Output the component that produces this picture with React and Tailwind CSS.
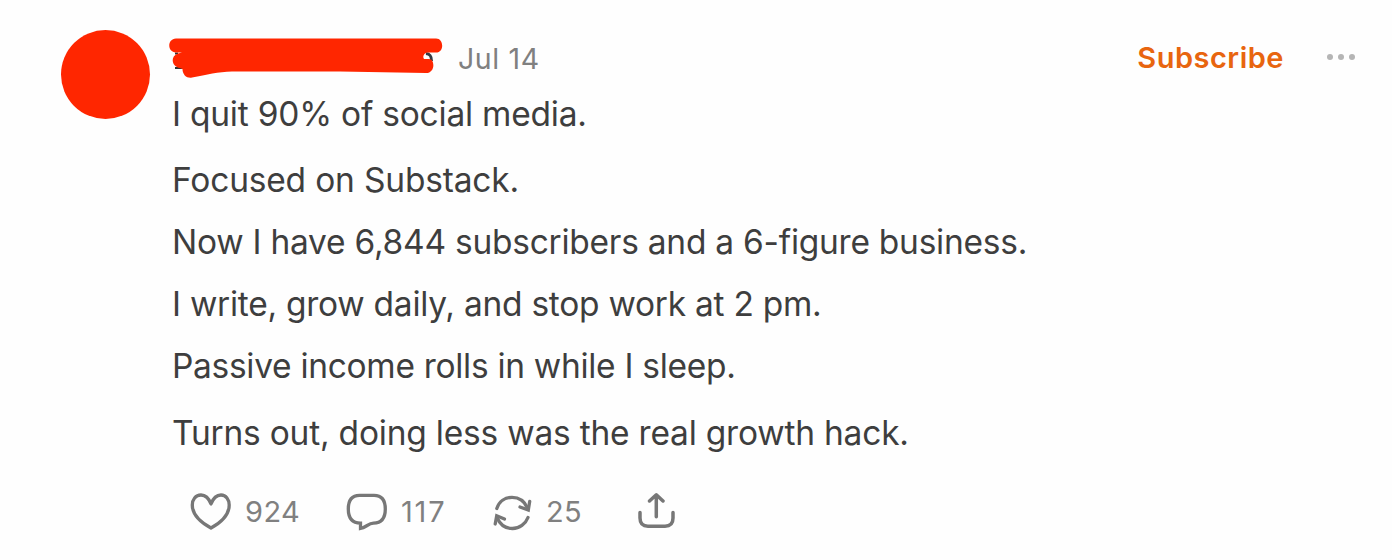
import React from 'react';

const LINES = [
  { text: 'I quit 90% of social media.', className: 'mb-1 tracking-[-0.22px]' },
  { text: 'Focused on Substack.', className: 'tracking-[-0.18px]' },
  { text: 'Now I have 6,844 subscribers and a 6-figure business.', className: 'tracking-[-0.25px]' },
  { text: 'I write, grow daily, and stop work at 2 pm.', className: 'tracking-[-0.26px]' },
  { text: 'Passive income rolls in while I sleep.', className: 'mb-[5px] tracking-[-0.3px]' },
  { text: 'Turns out, doing less was the real growth hack.', className: 'tracking-[-0.21px]' },
];

// Marker strokes that hide the author's name
function RedactedName() {
  return (
    <svg className="block h-[42px] w-[276px] shrink-0" viewBox="168 37 276 42">
      <path d="M175 52.500h3v2h-3zM175 67h9v2h-9z" fill="#333" />
      <path d="M426 53.500C430.500 54 431.500 56.500 431.500 61" fill="none" stroke="#333b44" strokeWidth="3" />
      <path
        d="M176 38.500H436C444 38.500 444.500 52.500 436 52.500H428C423 52.500 422 59 425 59H429C435 59 435.500 73 426 73L340 71.500H232C218 72 207 74.500 192 77.600C187 78.600 182.500 75 182.500 69L180 68C172 67 169.500 56.500 178 53.500L182 52.500H176C167 52 167 39 176 38.500Z"
        fill="#ff2600"
      />
    </svg>
  );
}

function HeartIcon() {
  return (
    <svg className="block h-10 w-[42px]" viewBox="190 491 42 40" fill="none" stroke="#777" strokeWidth="3.3" strokeLinejoin="round">
      <path d="M211 504C208.500 497.500 205 495 201 495C195.500 495 192.300 499.500 192.300 505C192.300 514 200 522 211 528C222 522 229.200 514 229.200 505C229.200 499.500 226 495 221 495C217 495 213.500 497.500 211 504Z" />
    </svg>
  );
}

function CommentIcon() {
  return (
    <svg className="block h-10 w-[42px]" viewBox="346 491 42 40" fill="none" stroke="#777" strokeWidth="3.3" strokeLinejoin="miter">
      <path d="M359.500 495.300H374C381.500 495.300 385.300 500 385.300 509C385.300 518.500 381.500 523 373.500 523.200C368.500 523.300 366 527.300 360.500 528.500V523.200C352 523 348.300 518.500 348.300 509C348.300 500 352 495.300 359.500 495.300Z" />
    </svg>
  );
}

function RestackIcon() {
  return (
    <svg className="block h-10 w-[42px]" viewBox="491 491 42 40" fill="none" stroke="#777" strokeWidth="3.3" strokeLinecap="round" strokeLinejoin="miter">
      <path d="M496.800 508.500C499 501.500 505 497.300 512 497.300C519 497.300 524.500 501 527.500 508" />
      <path d="M529.700 501.500L528.300 510L520 507" />
      <path d="M528 517.500C525.500 524 519.500 528.500 512.500 528.500C505.500 528.500 500 524.500 497 517.500" />
      <path d="M495.200 524L496.700 515.800L504.500 519" />
    </svg>
  );
}

function ShareIcon() {
  return (
    <svg className="block h-10 w-[42px]" viewBox="636 491 42 40" fill="none" stroke="#777" strokeWidth="3.5" strokeLinecap="round" strokeLinejoin="round">
      <path d="M656.300 516.800V495.500M649.500 501L656.300 494.800L663 501" />
      <path d="M640 512.500V518C640 523.500 643 526.200 648 526.200H665C670 526.200 673 523.500 673 518V512.500" />
    </svg>
  );
}

function App() {
  return (
    <div className="h-[560px] w-[1392px] overflow-hidden bg-[#fefefe] font-['Inter',sans-serif] text-[#3e3e3e]">
      <div className="flex">
        <div className="ml-[61px] mt-[30px] h-[89px] w-[89px] shrink-0 rounded-full bg-[#ff2600]" />

        <div className="ml-[18px] w-[1188px]">
          {/* Header */}
          <div className="flex h-[83px] items-start pt-[37px]">
            <RedactedName />
            <span className="ml-[14px] text-[28.5px] leading-[43px] tracking-[0.6px] text-[#808080]">Jul 14</span>
            <div className="ml-auto flex items-center">
              <span className="text-[29px] font-semibold leading-[42px] tracking-[0.5px] text-[#e8650f]">Subscribe</span>
              <svg className="ml-[42px] block h-2 w-[30px]" viewBox="0 0 30 8" fill="#b5b5b5">
                <circle cx="4" cy="3" r="3" />
                <circle cx="15" cy="3" r="3" />
                <circle cx="26" cy="3" r="3" />
              </svg>
            </div>
          </div>

          {/* Note body */}
          <div className="pl-1 text-[33.5px] leading-[62px]">
            {LINES.map((line) => (
              <p key={line.text} className={line.className}>
                <span className="whitespace-nowrap">{line.text}</span>
              </p>
            ))}
          </div>

          {/* Actions */}
          <div className="ml-[22px] mt-[27px] flex h-10 items-center text-[29px] text-[#808080]">
            <div className="flex w-[156px] items-center gap-[13px]">
              <HeartIcon />
              <span className="pt-0.5 tracking-[0.4px]">924</span>
            </div>
            <div className="flex w-[145px] items-center gap-[13px]">
              <CommentIcon />
              <span className="pt-0.5 tracking-[1.8px]">117</span>
            </div>
            <div className="flex w-[145px] items-center gap-[13px]">
              <RestackIcon />
              <span className="pt-0.5 tracking-[0.4px]">25</span>
            </div>
            <ShareIcon />
          </div>
        </div>
      </div>
    </div>
  );
}

export default App;
